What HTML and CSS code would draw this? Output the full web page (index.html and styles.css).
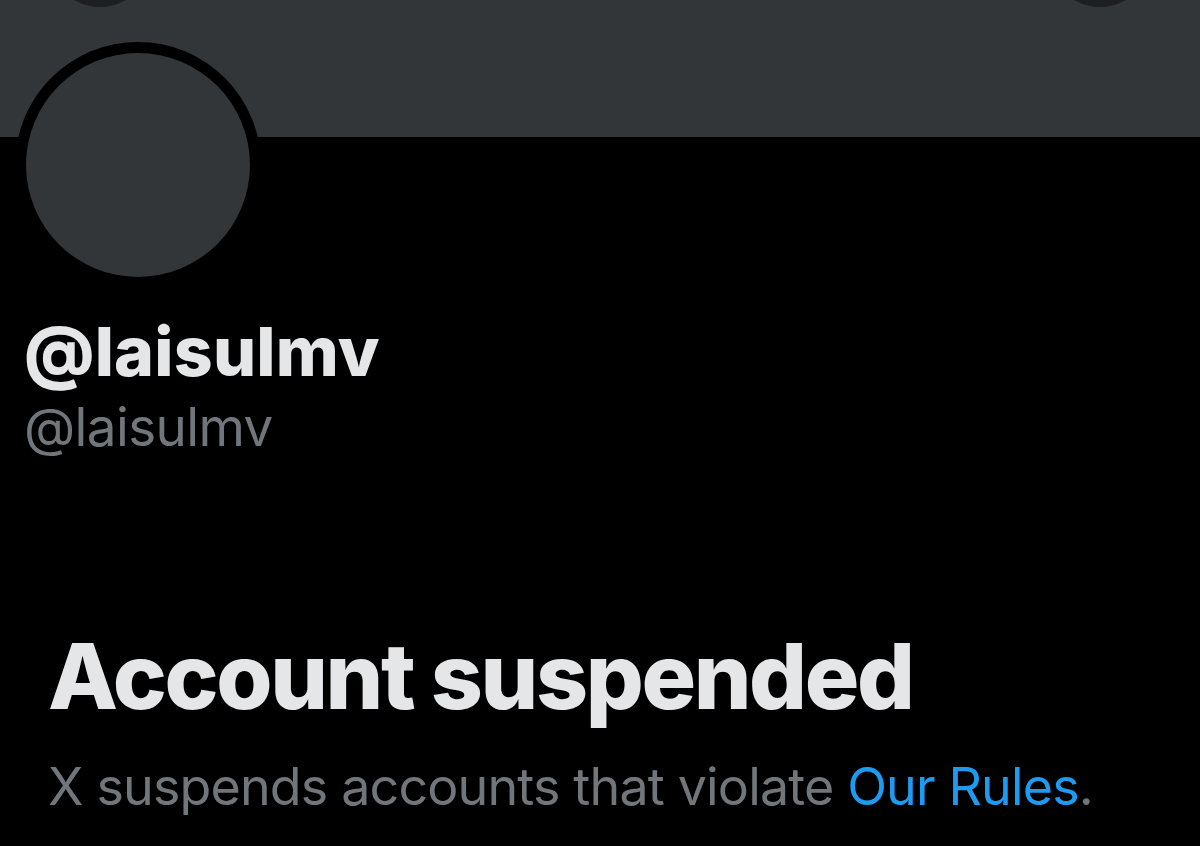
FILE: index.html
```html
<!DOCTYPE html>
<html lang="en">
<head>
<meta charset="utf-8">
<title>@laisulmv</title>
<link rel="stylesheet" href="styles.css">
</head>
<body>
<div class="page">
  <header class="banner">
    <span class="nav-btn nav-left"></span>
    <span class="nav-btn nav-right"></span>
  </header>
  <section class="profile">
    <div class="avatar"><div class="avatar-inner"></div></div>
    <h1 class="name">@laisulmv</h1>
    <div class="handle">@laisulmv</div>
  </section>
  <section class="notice">
    <h2 class="notice-title">Account suspended</h2>
    <p class="notice-text">X suspends accounts that violate <a class="link" href="#">Our Rules</a>.</p>
  </section>
</div>
</body>
</html>
```
FILE: styles.css
```css
html, body {
  margin: 0;
  padding: 0;
  background: #000;
}
body {
  font-family: Inter, "Noto Sans", sans-serif;
  width: 1200px;
  height: 846px;
  overflow: hidden;
}
.page {
  position: relative;
}
.banner {
  position: relative;
  height: 137px;
  background: #333639;
  overflow: hidden;
}
.nav-btn {
  position: absolute;
  top: -97px;
  width: 104px;
  height: 104px;
  border-radius: 50%;
  background: #1e1f22;
}
.nav-left { left: 48px; }
.nav-right { left: 1048px; }

.profile {
  padding-left: 24px;
}
.avatar {
  margin-top: -95px;
  margin-left: -9px;
  width: 246px;
  height: 246px;
  box-sizing: border-box;
  border-radius: 50%;
  background: #000;
  padding: 11px;
  position: relative;
}
.avatar-inner {
  width: 100%;
  height: 100%;
  border-radius: 50%;
  background: #333639;
}
.name {
  margin: 29px 0 0 0;
  font-size: 68px;
  line-height: 68px;
  font-weight: 800;
  letter-spacing: 0.2px;
  color: #e4e6e7;
}
.handle {
  margin-top: 16px;
  font-size: 53px;
  line-height: 53px;
  font-weight: 400;
  letter-spacing: -0.6px;
  color: #71767b;
}
.notice {
  padding-left: 48px;
}
.notice-title {
  margin: 177px 0 0 0;
  font-size: 91px;
  line-height: 91px;
  font-weight: 800;
  letter-spacing: -2.4px;
  color: #e4e6e7;
}
.notice-text {
  margin: 39px 0 0 0;
  font-size: 52px;
  line-height: 52px;
  font-weight: 400;
  letter-spacing: -0.85px;
  color: #71767b;
}
.link {
  color: #1d9bf0;
  text-decoration: none;
}
```
